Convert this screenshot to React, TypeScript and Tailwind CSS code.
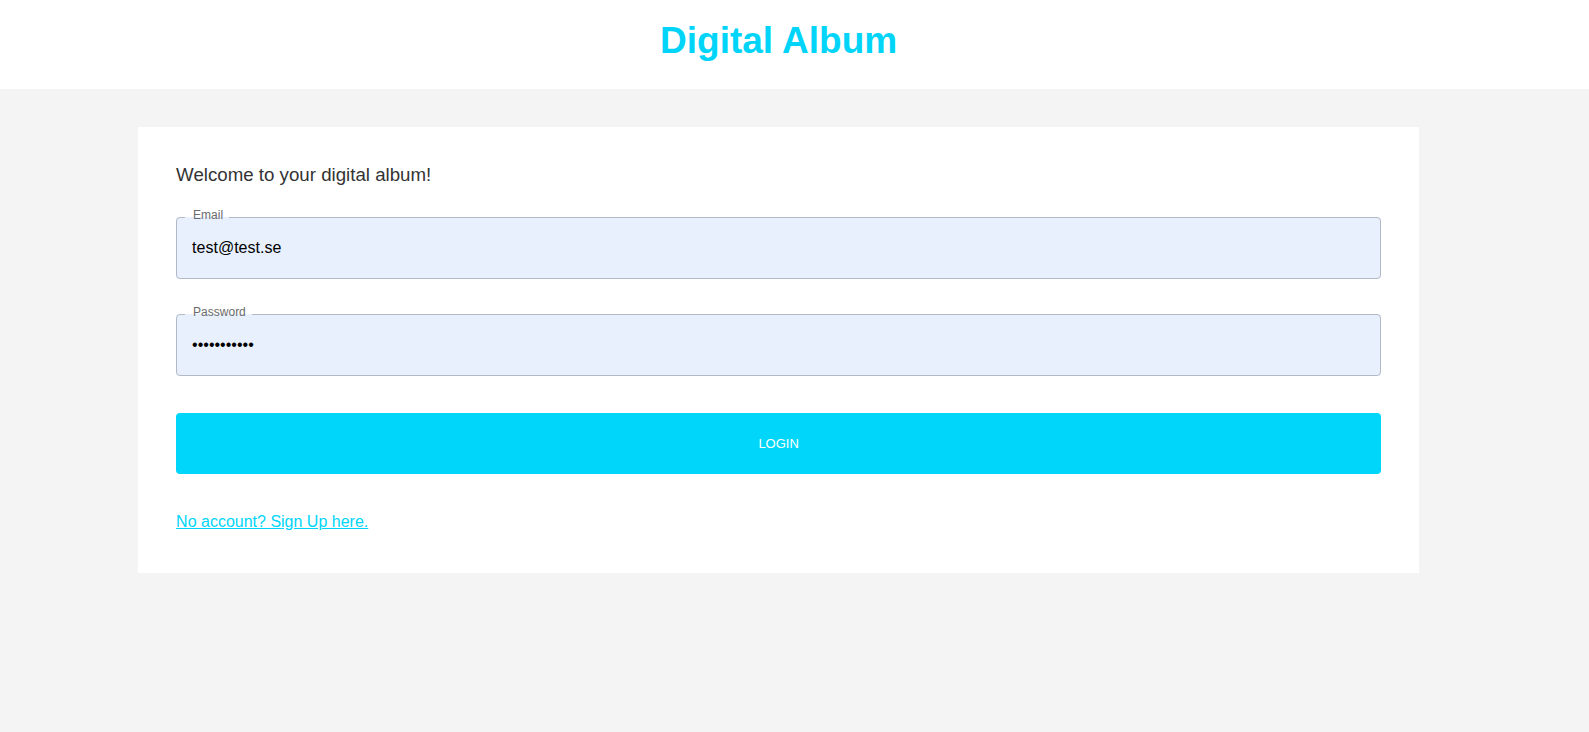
import React from 'react'

const FONT = { fontFamily: '"Liberation Sans", Arial, sans-serif' }

type FieldProps = {
  label: string
  type: string
  value: string
}

function Field({ label, type, value }: FieldProps) {
  return (
    <fieldset className="block min-w-0 m-0 rounded-[4px] border border-[#b3b9c5] bg-[#e8f0fe] pl-[8px] pr-[8px] pb-[7px]">
      {/* label sits a little above the border line, as in the original */}
      <legend className="relative -top-[3px] pl-[8px] pr-[6px] text-[12px] leading-[14px] text-[#6b6b6b]">{label}</legend>
      <input
        type={type}
        defaultValue={value}
        readOnly
        className="block w-full h-[46px] bg-transparent pl-[7px] text-[16px] leading-[18px] text-black outline-none"
        style={FONT}
      />
    </fieldset>
  )
}

export default function App() {
  return (
    <div className="min-h-screen flex flex-col bg-[#f4f4f4] leading-[1.15]" style={FONT}>
      {/* header: content is centred in 98% of the width, like the original page */}
      <header className="h-[89px] bg-white">
        <div className="w-[98%] pt-[20px] text-center">
          <h1 className="text-[37px] leading-[42px] font-bold text-[#00d5f9]">Digital Album</h1>
        </div>
      </header>

      <main className="flex-1">
        <div className="w-[98%] pt-[38px]">
          <div className="mx-auto w-[1281px] bg-white px-[38px] pt-[37px] pb-[42px]">
            <p className="text-[18.7px] leading-[21.5px] text-[#333333]">Welcome to your digital album!</p>

            <div className="mt-[25px] flex flex-col gap-[29px]">
              <Field label="Email" type="email" value="test@test.se" />
              <Field label="Password" type="password" value="12345678901" />
            </div>

            <button
              type="button"
              className="mt-[37px] block w-full h-[61px] rounded-[4px] bg-[#00d6fa] text-[13px] leading-[15px] text-white uppercase"
            >
              Login
            </button>

            <div className="mt-[39px] leading-[18.4px]">
              <a href="#" className="text-[16px] leading-[18.4px] text-[#00d5f9] underline">
                No account? Sign Up here.
              </a>
            </div>
          </div>
        </div>
      </main>
    </div>
  )
}
